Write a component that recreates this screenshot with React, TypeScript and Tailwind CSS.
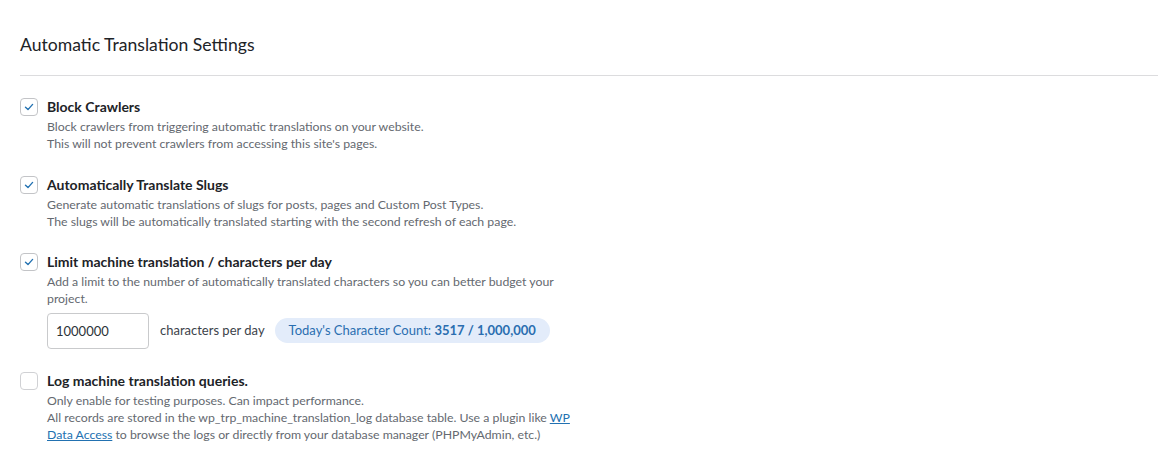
import { useState } from "react";

interface Setting {
  id: string;
  label: string;
  checked: boolean;
}

function CheckIcon() {
  return (
    <svg width="12" height="12" viewBox="0 0 12 12" fill="none">
      <path d="M2.5 6.3 L5 8.6 L9.6 3.4" stroke="#2271b1" strokeWidth="1.4" strokeLinecap="round" strokeLinejoin="round" />
    </svg>
  );
}

function Checkbox({ checked, onChange }: { checked: boolean; onChange: () => void }) {
  return (
    <button
      type="button"
      onClick={onChange}
      className={`flex h-[18px] w-[18px] shrink-0 items-center justify-center rounded-[4px] border bg-white ${
        checked ? "border-[#c3c4c7]" : "border-[#d0d1d4]"
      }`}
    >
      {checked && <CheckIcon />}
    </button>
  );
}

export default function App() {
  const [settings, setSettings] = useState<Setting[]>([
    { id: "crawlers", label: "Block Crawlers", checked: true },
    { id: "slugs", label: "Automatically Translate Slugs", checked: true },
    { id: "limit", label: "Limit machine translation / characters per day", checked: true },
    { id: "log", label: "Log machine translation queries.", checked: false },
  ]);
  const [limit, setLimit] = useState("1000000");

  const toggle = (id: string) =>
    setSettings((s) => s.map((x) => (x.id === id ? { ...x, checked: !x.checked } : x)));

  const desc = (id: string) => {
    switch (id) {
      case "crawlers":
        return (
          <>
            <p>Block crawlers from triggering automatic translations on your website.</p>
            <p>This will not prevent crawlers from accessing this site's pages.</p>
          </>
        );
      case "slugs":
        return (
          <>
            <p>Generate automatic translations of slugs for posts, pages and Custom Post Types.</p>
            <p>The slugs will be automatically translated starting with the second refresh of each page.</p>
          </>
        );
      case "limit":
        return (
          <>
            <p className="max-w-[515px]">
              Add a limit to the number of automatically translated characters so you can better budget your project.
            </p>
            <div className="mt-[5px] flex items-center">
              <input
                value={limit}
                onChange={(e) => setLimit(e.target.value)}
                className="h-[36px] w-[102px] rounded-[4px] border border-[#c9cacc] px-[8px] text-[13px] text-[#2c3338] outline-none"
              />
              <span className="ml-[11px] text-[13px] text-[#3c434a]">characters per day</span>
              <span className="ml-[10px] flex h-[25px] items-center rounded-full bg-[#e3ecfa] px-[14px] text-[13px] text-[#2a6eb0]">
                Today's Character Count:&nbsp;<b className="font-bold">3517 / 1,000,000</b>
              </span>
            </div>
          </>
        );
      default:
        return (
          <>
            <p>Only enable for testing purposes. Can impact performance.</p>
            <p className="max-w-[532px]">
              All records are stored in the wp_trp_machine_translation_log database table. Use a plugin like{" "}
              <a href="#" className="text-[#2271b1] underline">
                WP Data Access
              </a>{" "}
              to browse the logs or directly from your database manager (PHPMyAdmin, etc.)
            </p>
          </>
        );
    }
  };

  return (
    <div
      className="h-[462px] w-full bg-white pl-[20px] pr-[13px] pt-[33px] text-[#1d2327]"
      style={{ fontFamily: 'Lato, "Open Sans", sans-serif' }}
    >
      <h2 className="text-[17.6px] leading-[24px] text-[#1d2327]">Automatic Translation Settings</h2>
      <div className="mt-[18px] border-t border-[#dcdcde]" />

      <div className="mt-[22px] flex flex-col gap-[23px]">
        {settings.map((s) => (
          <div key={s.id}>
            <div className="flex items-center gap-[9px]">
              <Checkbox checked={s.checked} onChange={() => toggle(s.id)} />
              <span className="text-[14px] font-bold leading-[18px]">{s.label}</span>
            </div>
            <div className="ml-[27px] mt-[2px] text-[12.3px] leading-[17.3px] text-[#646970]">{desc(s.id)}</div>
          </div>
        ))}
      </div>
    </div>
  );
}
